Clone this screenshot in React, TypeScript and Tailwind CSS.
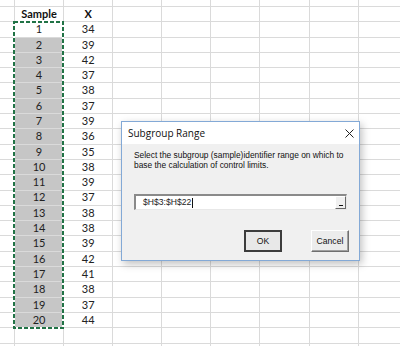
import React from 'react';

const values = [34, 39, 42, 37, 38, 37, 39, 36, 35, 38, 39, 37, 38, 38, 39, 42, 41, 38, 37, 44];

const COLS = 8;

const Row: React.FC<{ a?: React.ReactNode; b?: React.ReactNode; bold?: boolean; fillA?: boolean; h?: string }> = ({
  a,
  b,
  bold,
  fillA,
  h = 'h-[15.3px]',
}) => (
  <div className={`flex ${h} shrink-0 border-b border-[#dadada]`}>
    <div className="w-[15px] shrink-0 border-r border-[#dadada]" />
    <div
      className={`w-[49.1px] shrink-0 border-r border-[#dadada] flex items-center justify-center ${
        fillA ? 'bg-[#c6c6c6]' : ''
      } ${bold ? 'font-bold text-[#111]' : 'text-[#222]'}`}
    >
      {a}
    </div>
    <div
      className={`w-[49.1px] shrink-0 border-r border-[#dadada] flex items-center justify-center ${
        bold ? 'font-bold text-[#111]' : 'text-[#222]'
      }`}
    >
      {b}
    </div>
    {Array.from({ length: COLS - 2 }).map((_, i) => (
      <div key={i} className="w-[49.1px] shrink-0 border-r border-[#dadada]" />
    ))}
  </div>
);

const Dialog: React.FC = () => (
  <div className="absolute left-[121px] top-[121px] w-[239px] h-[140px] border border-[#83a9d6] bg-[#f0f0f0] shadow-[2px_3px_8px_rgba(0,0,0,0.25)] flex flex-col font-['Liberation_Sans',sans-serif]">
    {/* title bar */}
    <div className="h-[22px] shrink-0 bg-white flex items-center justify-between pl-[6px] pr-[4px]">
      <span className="text-[10px] text-[#111] font-['Open_Sans',sans-serif]">Subgroup Range</span>
      <svg width="9" height="9" viewBox="0 0 9 9" className="mr-[1px]">
        <path d="M0.5 0.5 L8.5 8.5 M8.5 0.5 L0.5 8.5" stroke="#222" strokeWidth="1" />
      </svg>
    </div>

    {/* body */}
    <div className="flex flex-col px-[12px] pt-[6px]">
      <p className="text-[8.4px] leading-[10px] text-[#111]">
        Select the subgroup (sample)identifier range on which to
        <br />
        base the calculation of control limits.
      </p>

      <div className="mt-[24px] h-[16px] flex border-t-2 border-l-2 border-[#8a8a8a] border-b border-r border-b-[#e8e8e8] border-r-[#e8e8e8] bg-white">
        <div className="flex-1 flex items-center pl-[7px] text-[8.6px] text-[#222]">
          $H$3:$H$22
          <span className="ml-[1px] w-px h-[10px] bg-[#111]" />
        </div>
        <div className="w-[11px] h-[13px] bg-[#f0f0f0] border-t border-l border-white border-b border-r border-b-[#696969] border-r-[#696969] flex items-end justify-center pb-[2px]">
          <span className="block w-[4px] h-[1px] bg-[#111]" />
        </div>
      </div>
    </div>

    <div className="flex justify-end gap-[29px] pr-[10px] mt-[20px]">
      <button className="w-[38px] h-[22px] border-2 border-[#3c3c3c] bg-[#e8e8e8] text-[8.6px] text-[#111] flex items-center justify-center">
        OK
      </button>
      <button className="w-[38px] h-[22px] border border-t-white border-l-white border-b-[#6f6f6f] border-r-[#6f6f6f] bg-[#ececec] shadow-[inset_-1px_-1px_0_#a0a0a0] text-[8.6px] text-[#111] flex items-center justify-center">
        Cancel
      </button>
    </div>
  </div>
);

export default function App() {
  return (
    <div className="relative w-[400px] h-[346px] overflow-hidden bg-white font-['Lato',sans-serif] text-[11px]">
      <div className="flex flex-col">
        <Row h="h-[7px]" />
        <Row a="Sample" b="X" bold />
        {values.map((v, i) => (
          <Row key={i} a={i + 1} b={v} fillA={i > 0} />
        ))}
        <Row />
        <Row />
      </div>

      {/* copy selection marquee */}
      <svg className="absolute left-[13px] top-[20.5px]" width="51" height="308">
        <rect x="1" y="1" width="49" height="306" fill="none" stroke="#ffffff" strokeWidth="2" />
        <rect x="1" y="1" width="49" height="306" fill="none" stroke="#217346" strokeWidth="2" strokeDasharray="4 2" />
      </svg>

      <Dialog />
    </div>
  );
}
